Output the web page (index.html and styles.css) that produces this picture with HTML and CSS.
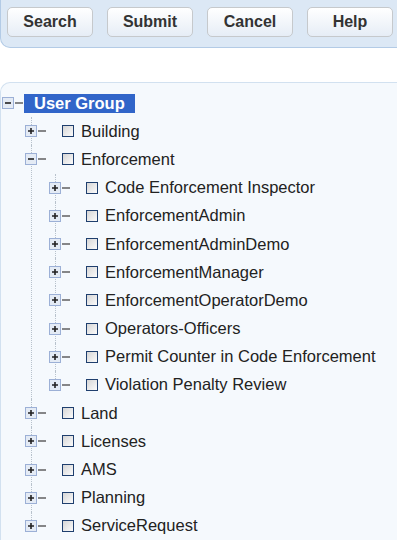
FILE: index.html
```html
<!DOCTYPE html>
<html lang="en">
<head>
  <meta charset="UTF-8">
  <title>User Group</title>
  <link rel="stylesheet" href="styles.css">
</head>
<body>
  <div class="toolbar">
    <button type="button" class="btn">Search</button>
    <button type="button" class="btn">Submit</button>
    <button type="button" class="btn">Cancel</button>
    <button type="button" class="btn">Help</button>
  </div>

  <div class="panel">
    <ul class="tree">
      <li>
        <div class="row root">
          <svg class="toggle" width="21" height="12" viewBox="0 0 21 12"><rect x="0.5" y="0.5" width="11" height="11" fill="#e4ebf5" stroke="#9cb0d6"/><path d="M3 6h6" stroke="#222" stroke-width="1.6"/><path d="M13 6h8" stroke="#555" stroke-width="1.4"/></svg>
          <span class="root-label">User Group</span>
        </div>
        <ul>
          <li><div class="row"><svg class="toggle" width="21" height="12" viewBox="0 0 21 12"><rect x="0.5" y="0.5" width="11" height="11" fill="#e4ebf5" stroke="#9cb0d6"/><path d="M3 6h6M6 3v6" stroke="#222" stroke-width="1.6"/><path d="M13 6h8" stroke="#555" stroke-width="1.4"/></svg><span class="check"></span><span class="name">Building</span></div></li>
          <li>
            <div class="row"><svg class="toggle" width="21" height="12" viewBox="0 0 21 12"><rect x="0.5" y="0.5" width="11" height="11" fill="#e4ebf5" stroke="#9cb0d6"/><path d="M3 6h6" stroke="#222" stroke-width="1.6"/><path d="M13 6h8" stroke="#555" stroke-width="1.4"/></svg><span class="check"></span><span class="name">Enforcement</span></div>
            <ul>
              <li><div class="row"><svg class="toggle" width="21" height="12" viewBox="0 0 21 12"><rect x="0.5" y="0.5" width="11" height="11" fill="#e4ebf5" stroke="#9cb0d6"/><path d="M3 6h6M6 3v6" stroke="#222" stroke-width="1.6"/><path d="M13 6h8" stroke="#555" stroke-width="1.4"/></svg><span class="check"></span><span class="name">Code Enforcement Inspector</span></div></li>
              <li><div class="row"><svg class="toggle" width="21" height="12" viewBox="0 0 21 12"><rect x="0.5" y="0.5" width="11" height="11" fill="#e4ebf5" stroke="#9cb0d6"/><path d="M3 6h6M6 3v6" stroke="#222" stroke-width="1.6"/><path d="M13 6h8" stroke="#555" stroke-width="1.4"/></svg><span class="check"></span><span class="name">EnforcementAdmin</span></div></li>
              <li><div class="row"><svg class="toggle" width="21" height="12" viewBox="0 0 21 12"><rect x="0.5" y="0.5" width="11" height="11" fill="#e4ebf5" stroke="#9cb0d6"/><path d="M3 6h6M6 3v6" stroke="#222" stroke-width="1.6"/><path d="M13 6h8" stroke="#555" stroke-width="1.4"/></svg><span class="check"></span><span class="name">EnforcementAdminDemo</span></div></li>
              <li><div class="row"><svg class="toggle" width="21" height="12" viewBox="0 0 21 12"><rect x="0.5" y="0.5" width="11" height="11" fill="#e4ebf5" stroke="#9cb0d6"/><path d="M3 6h6M6 3v6" stroke="#222" stroke-width="1.6"/><path d="M13 6h8" stroke="#555" stroke-width="1.4"/></svg><span class="check"></span><span class="name">EnforcementManager</span></div></li>
              <li><div class="row"><svg class="toggle" width="21" height="12" viewBox="0 0 21 12"><rect x="0.5" y="0.5" width="11" height="11" fill="#e4ebf5" stroke="#9cb0d6"/><path d="M3 6h6M6 3v6" stroke="#222" stroke-width="1.6"/><path d="M13 6h8" stroke="#555" stroke-width="1.4"/></svg><span class="check"></span><span class="name">EnforcementOperatorDemo</span></div></li>
              <li><div class="row"><svg class="toggle" width="21" height="12" viewBox="0 0 21 12"><rect x="0.5" y="0.5" width="11" height="11" fill="#e4ebf5" stroke="#9cb0d6"/><path d="M3 6h6M6 3v6" stroke="#222" stroke-width="1.6"/><path d="M13 6h8" stroke="#555" stroke-width="1.4"/></svg><span class="check"></span><span class="name">Operators-Officers</span></div></li>
              <li><div class="row"><svg class="toggle" width="21" height="12" viewBox="0 0 21 12"><rect x="0.5" y="0.5" width="11" height="11" fill="#e4ebf5" stroke="#9cb0d6"/><path d="M3 6h6M6 3v6" stroke="#222" stroke-width="1.6"/><path d="M13 6h8" stroke="#555" stroke-width="1.4"/></svg><span class="check"></span><span class="name">Permit Counter in Code Enforcement</span></div></li>
              <li><div class="row"><svg class="toggle" width="21" height="12" viewBox="0 0 21 12"><rect x="0.5" y="0.5" width="11" height="11" fill="#e4ebf5" stroke="#9cb0d6"/><path d="M3 6h6M6 3v6" stroke="#222" stroke-width="1.6"/><path d="M13 6h8" stroke="#555" stroke-width="1.4"/></svg><span class="check"></span><span class="name">Violation Penalty Review</span></div></li>
            </ul>
          </li>
          <li><div class="row"><svg class="toggle" width="21" height="12" viewBox="0 0 21 12"><rect x="0.5" y="0.5" width="11" height="11" fill="#e4ebf5" stroke="#9cb0d6"/><path d="M3 6h6M6 3v6" stroke="#222" stroke-width="1.6"/><path d="M13 6h8" stroke="#555" stroke-width="1.4"/></svg><span class="check"></span><span class="name">Land</span></div></li>
          <li><div class="row"><svg class="toggle" width="21" height="12" viewBox="0 0 21 12"><rect x="0.5" y="0.5" width="11" height="11" fill="#e4ebf5" stroke="#9cb0d6"/><path d="M3 6h6M6 3v6" stroke="#222" stroke-width="1.6"/><path d="M13 6h8" stroke="#555" stroke-width="1.4"/></svg><span class="check"></span><span class="name">Licenses</span></div></li>
          <li><div class="row"><svg class="toggle" width="21" height="12" viewBox="0 0 21 12"><rect x="0.5" y="0.5" width="11" height="11" fill="#e4ebf5" stroke="#9cb0d6"/><path d="M3 6h6M6 3v6" stroke="#222" stroke-width="1.6"/><path d="M13 6h8" stroke="#555" stroke-width="1.4"/></svg><span class="check"></span><span class="name">AMS</span></div></li>
          <li><div class="row"><svg class="toggle" width="21" height="12" viewBox="0 0 21 12"><rect x="0.5" y="0.5" width="11" height="11" fill="#e4ebf5" stroke="#9cb0d6"/><path d="M3 6h6M6 3v6" stroke="#222" stroke-width="1.6"/><path d="M13 6h8" stroke="#555" stroke-width="1.4"/></svg><span class="check"></span><span class="name">Planning</span></div></li>
          <li><div class="row"><svg class="toggle" width="21" height="12" viewBox="0 0 21 12"><rect x="0.5" y="0.5" width="11" height="11" fill="#e4ebf5" stroke="#9cb0d6"/><path d="M3 6h6M6 3v6" stroke="#222" stroke-width="1.6"/><path d="M13 6h8" stroke="#555" stroke-width="1.4"/></svg><span class="check"></span><span class="name">ServiceRequest</span></div></li>
        </ul>
      </li>
    </ul>
  </div>
</body>
</html>
```

FILE: styles.css
```css
body {
  margin: 0;
  font-family: 'Liberation Sans', Arial, sans-serif;
  color: #222;
  background: #fff;
  overflow: hidden;
}
.toolbar {
  display: flex;
  gap: 14px;
  padding: 7px 0 10px 6px;
  background: #dce8f5;
  border: 1px solid #b3cbe6;
  border-top: none;
  border-right: none;
  border-radius: 0 0 0 10px;
}
.btn {
  width: 86px;
  height: 30px;
  padding: 0;
  font-family: 'Liberation Sans', Arial, sans-serif;
  font-size: 16px;
  font-weight: bold;
  color: #333;
  background: linear-gradient(#ffffff, #e6edf6);
  border: 1px solid #c6c9cc;
  border-radius: 5px;
  cursor: pointer;
}
.panel {
  margin-top: 34px;
  min-height: 460px;
  padding-top: 6px;
  background: #f5f9fd;
  border-top: 1px solid #d2e1f0;
  border-left: 1px solid #d2e1f0;
  border-radius: 10px 0 0 0;
}
.tree, .tree ul {
  list-style: none;
  margin: 0;
  padding: 0;
}
.tree ul {
  padding-left: 24px;
}
.tree ul li {
  position: relative;
}
/* dotted connector between sibling toggles */
.tree ul li::before {
  content: '';
  position: absolute;
  left: 6px;
  top: 0;
  bottom: 0;
  border-left: 1px dotted #b8c2cc;
}
.tree ul li:last-child::before {
  bottom: auto;
  height: 14px;
}
.row {
  position: relative;
  display: flex;
  align-items: center;
  height: 28.2px;
}
.root {
  margin-left: 1px;
}
.toggle {
  flex: none;
  display: block;
}
.root-label {
  height: 19px;
  line-height: 19px;
  margin-left: 1px;
  padding: 0 10px;
  background: #3165c9;
  color: #fff;
  font-size: 16.5px;
  font-weight: bold;
}
.check {
  flex: none;
  width: 10px;
  height: 10px;
  margin-left: 16px;
  border: 1px solid #1f3f6e;
  background: linear-gradient(135deg, #d6d6d6, #fbfbfb);
}
.name {
  margin-left: 7px;
  font-size: 16.5px;
  white-space: nowrap;
}
```
